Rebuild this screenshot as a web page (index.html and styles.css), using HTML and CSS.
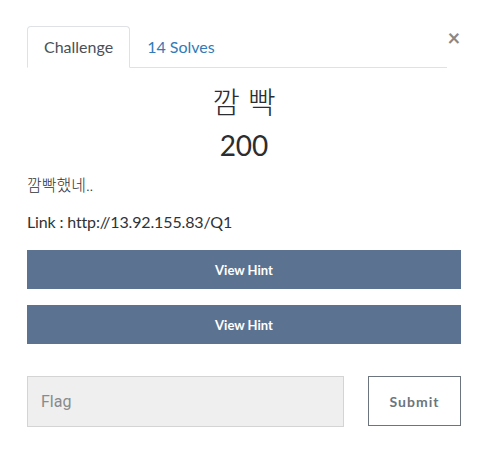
FILE: index.html
```html
<!DOCTYPE html>
<html>
<head>
<meta charset="utf-8">
<link rel="stylesheet" href="styles.css">
</head>
<body>
<div class="modal">
  <div class="header">
    <ul class="tabs">
      <li class="tab active">Challenge</li>
      <li class="tab link">14 Solves</li>
    </ul>
    <button class="close">&times;</button>
  </div>
  <h3 class="name">깜 빡</h3>
  <h3 class="value">200</h3>
  <div class="desc">
    <p class="ko">깜빡했네..</p>
    <p>Link : http://13.92.155.83/Q1</p>
  </div>
  <div class="hints">
    <button class="hint">View Hint</button>
    <button class="hint">View Hint</button>
  </div>
  <div class="submit-row">
    <input class="flag" type="text" placeholder="Flag">
    <button class="submit">Submit</button>
  </div>
</div>
</body>
</html>
```
FILE: styles.css
```css
* { box-sizing: border-box; }
body {
  margin: 0;
  background: #fff;
  font-family: "Lato", "Noto Sans CJK KR", sans-serif;
  color: #212529;
}
.modal {
  padding: 26px 25px 0 27px;
}
.header {
  display: flex;
  align-items: flex-start;
}
.tabs {
  flex: 1;
  display: flex;
  list-style: none;
  margin: 0;
  padding: 0;
  border-bottom: 1px solid #dee2e6;
}
.tab {
  padding: 8px 16px;
  font-size: 16px;
  line-height: 24px;
  border: 1px solid transparent;
  border-radius: 4px 4px 0 0;
  margin-bottom: -1px;
}
.tab.active {
  color: #495057;
  border-color: #dee2e6 #dee2e6 #fff;
  background: #fff;
}
.tab.link { color: #337ab7; }
.close {
  width: 14px;
  margin: 2px 0 0 0;
  padding: 0;
  border: 0;
  background: none;
  font-family: "Lato", sans-serif;
  font-size: 22px;
  font-weight: 700;
  line-height: 20px;
  color: #888;
}
.name, .value {
  margin: 0 0 8px;
  text-align: center;
  font-weight: 400;
  font-size: 28px;
  line-height: 36px;
  color: #2a2e33;
}
.name { padding-top: 15px; font-weight: 300; font-size: 30px; }
.desc { margin-top: 10px; }
.desc p {
  margin: 0 0 16px;
  font-size: 16px;
  line-height: 24px;
  letter-spacing: -0.15px;
  color: #2f3337;
}
.desc p.ko { margin-bottom: 13px; font-weight: 300; letter-spacing: 0; }
.hints { display: flex; flex-direction: column; gap: 16px; }
.hint {
  height: 39px;
  border: 0;
  background: #5c7291;
  color: #fff;
  font-family: "Lato", sans-serif;
  font-weight: 700;
  font-size: 13px;
}
.submit-row {
  display: flex;
  gap: 24px;
  margin-top: 32px;
}
.flag {
  width: 317px;
  height: 51px;
  background: #efefef;
  border: 1px solid #d4d4d4;
  padding: 0 13px;
  font-family: "Roboto", sans-serif;
  font-size: 16px;
}
.flag::placeholder { color: #8a8a8a; }
.submit {
  flex: 1;
  height: 50px;
  background: #fff;
  border: 1px solid #6c757d;
  color: #6c757d;
  font-family: "Lato", sans-serif;
  font-weight: 700;
  font-size: 14px;
  letter-spacing: 1px;
}
```
